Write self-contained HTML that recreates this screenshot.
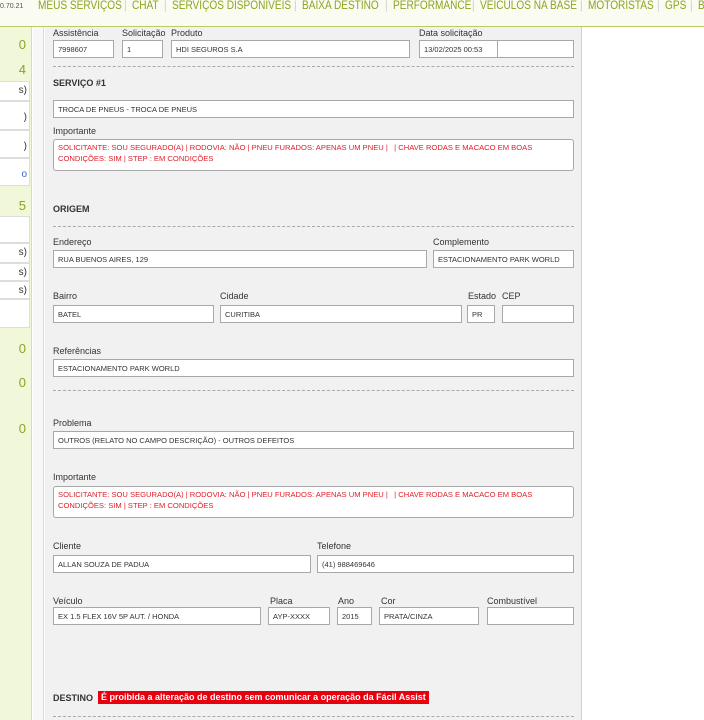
<!DOCTYPE html>
<html><head><meta charset="utf-8"><style>
*{margin:0;padding:0;box-sizing:border-box}
body{width:704px;height:720px;overflow:hidden;background:#fff;font-family:"Liberation Sans",sans-serif;position:relative;font-size:9px;color:#333}
.a{position:absolute}
.nav{left:0;top:0;width:704px;height:27px;background:#fafcf2;border-bottom:1px solid #b9cc6a}
.nav span.it{position:absolute;top:-2px;font-size:12px;color:#8aa420;white-space:nowrap;transform:scaleX(0.84);transform-origin:0 0}
.side{left:0;top:27px;width:32px;height:693px;background:#f1f7d9;border-right:1px solid #d6e3a0}
.strip{left:33px;top:27px;width:11px;height:693px;background:#f7f7f7;border-right:1px solid #d8d8d8}
.panel{left:45px;top:27px;width:537px;height:693px;background:#f1f1f1;border-right:1px solid #d0d0d0}
.num{font-size:13px;color:#8aa420;right:678px;text-align:right}
.sb{left:0;width:30px;background:#fff;border:1px solid #ddd;border-left:none;font-size:10px;text-align:right;padding-right:2px}
.l{font-size:9px;color:#333}
.i{background:#fff;border:1px solid #a8a8a8;height:18px;font-size:7.5px;padding:4px 4px;white-space:nowrap;overflow:hidden;color:#333}
.t{background:#fff;border:1px solid #a8a8a8;border-radius:3px;height:32px;font-size:7.6px;padding:2px 4px;color:#e0202a;line-height:11px}
.h{font-size:9px;font-weight:bold;color:#333}
.d{left:53px;width:521px;border-top:1px dashed #aaa;height:0}
</style></head><body>
<div class="a nav">
<span class="a" style="left:0;top:3px;font-size:7px;color:#555">0.70.21</span>
<span class="it" style="left:38px">MEUS SERVIÇOS</span>
<span class="it" style="left:124px;color:#ccc">|</span>
<span class="it" style="left:132px">CHAT</span>
<span class="it" style="left:164px;color:#ccc">|</span>
<span class="it" style="left:172px">SERVIÇOS DISPONIVEIS</span>
<span class="it" style="left:294px;color:#ccc">|</span>
<span class="it" style="left:302px">BAIXA DESTINO</span>
<span class="it" style="left:385px;color:#ccc">|</span>
<span class="it" style="left:393px">PERFORMANCE</span>
<span class="it" style="left:472px;color:#ccc">|</span>
<span class="it" style="left:480px">VEICULOS NA BASE</span>
<span class="it" style="left:580px;color:#ccc">|</span>
<span class="it" style="left:588px">MOTORISTAS</span>
<span class="it" style="left:657px;color:#ccc">|</span>
<span class="it" style="left:665px">GPS</span>
<span class="it" style="left:690px;color:#ccc">|</span>
<span class="it" style="left:698px">B</span>
</div>
<div class="a side"></div>
<div class="a strip"></div>
<div class="a panel"></div>
<div class="a num" style="top:37px">0</div>
<div class="a num" style="top:62px">4</div>
<div class="a sb" style="top:81px;height:20px;padding-top:3px">s)</div>
<div class="a sb" style="top:101px;height:29px;padding-top:10px">)</div>
<div class="a sb" style="top:130px;height:28px;padding-top:10px">)</div>
<div class="a sb" style="top:158px;height:28px;padding-top:10px;color:#36c">o</div>
<div class="a num" style="top:198px">5</div>
<div class="a sb" style="top:216px;height:27px"></div>
<div class="a sb" style="top:243px;height:20px;padding-top:3px">s)</div>
<div class="a sb" style="top:263px;height:18px;padding-top:3px">s)</div>
<div class="a sb" style="top:281px;height:18px;padding-top:3px">s)</div>
<div class="a sb" style="top:299px;height:29px"></div>
<div class="a num" style="top:341px">0</div>
<div class="a num" style="top:375px">0</div>
<div class="a num" style="top:421px">0</div>

<div class="a l" style="left:53px;top:28px">Assistência</div>
<div class="a l" style="left:122px;top:28px">Solicitação</div>
<div class="a l" style="left:171px;top:28px">Produto</div>
<div class="a l" style="left:419px;top:28px">Data solicitação</div>
<div class="a i" style="left:53px;top:40px;width:61px">7998607</div>
<div class="a i" style="left:122px;top:40px;width:41px">1</div>
<div class="a i" style="left:171px;top:40px;width:239px">HDI SEGUROS S.A</div>
<div class="a i" style="left:419px;top:40px;width:79px">13/02/2025 00:53</div>
<div class="a i" style="left:497px;top:40px;width:77px"></div>
<div class="a d" style="top:66px"></div>
<div class="a h" style="left:53px;top:78px">SERVIÇO #1</div>
<div class="a i" style="left:53px;top:100px;width:521px">TROCA DE PNEUS - TROCA DE PNEUS</div>
<div class="a l" style="left:53px;top:126px">Importante</div>
<div class="a t" style="left:53px;top:139px;width:521px">SOLICITANTE: SOU SEGURADO(A) | RODOVIA: NÃO | PNEU FURADOS: APENAS UM PNEU | &nbsp; | CHAVE RODAS E MACACO EM BOAS CONDIÇÕES: SIM | STEP : EM CONDIÇÕES</div>
<div class="a h" style="left:53px;top:204px">ORIGEM</div>
<div class="a d" style="top:226px"></div>
<div class="a l" style="left:53px;top:237px">Endereço</div>
<div class="a l" style="left:433px;top:237px">Complemento</div>
<div class="a i" style="left:53px;top:250px;width:374px">RUA BUENOS AIRES, 129</div>
<div class="a i" style="left:433px;top:250px;width:141px">ESTACIONAMENTO PARK WORLD</div>
<div class="a l" style="left:53px;top:291px">Bairro</div>
<div class="a l" style="left:220px;top:291px">Cidade</div>
<div class="a l" style="left:468px;top:291px">Estado</div>
<div class="a l" style="left:502px;top:291px">CEP</div>
<div class="a i" style="left:53px;top:305px;width:161px">BATEL</div>
<div class="a i" style="left:220px;top:305px;width:242px">CURITIBA</div>
<div class="a i" style="left:467px;top:305px;width:28px">PR</div>
<div class="a i" style="left:502px;top:305px;width:72px"></div>
<div class="a l" style="left:53px;top:346px">Referências</div>
<div class="a i" style="left:53px;top:359px;width:521px">ESTACIONAMENTO PARK WORLD</div>
<div class="a d" style="top:390px"></div>
<div class="a l" style="left:53px;top:418px">Problema</div>
<div class="a i" style="left:53px;top:431px;width:521px">OUTROS (RELATO NO CAMPO DESCRIÇÃO) - OUTROS DEFEITOS</div>
<div class="a l" style="left:53px;top:472px">Importante</div>
<div class="a t" style="left:53px;top:486px;width:521px">SOLICITANTE: SOU SEGURADO(A) | RODOVIA: NÃO | PNEU FURADOS: APENAS UM PNEU | &nbsp; | CHAVE RODAS E MACACO EM BOAS CONDIÇÕES: SIM | STEP : EM CONDIÇÕES</div>
<div class="a l" style="left:53px;top:541px">Cliente</div>
<div class="a l" style="left:317px;top:541px">Telefone</div>
<div class="a i" style="left:53px;top:555px;width:258px">ALLAN SOUZA DE PADUA</div>
<div class="a i" style="left:317px;top:555px;width:257px">(41) 988469646</div>
<div class="a l" style="left:53px;top:596px">Veículo</div>
<div class="a l" style="left:270px;top:596px">Placa</div>
<div class="a l" style="left:338px;top:596px">Ano</div>
<div class="a l" style="left:381px;top:596px">Cor</div>
<div class="a l" style="left:487px;top:596px">Combustível</div>
<div class="a i" style="left:53px;top:607px;width:208px">EX 1.5 FLEX 16V 5P AUT. / HONDA</div>
<div class="a i" style="left:268px;top:607px;width:62px">AYP-XXXX</div>
<div class="a i" style="left:337px;top:607px;width:35px">2015</div>
<div class="a i" style="left:379px;top:607px;width:100px">PRATA/CINZA</div>
<div class="a i" style="left:487px;top:607px;width:87px"></div>
<div class="a h" style="left:53px;top:693px">DESTINO</div>
<div class="a" style="left:98px;top:691px;width:331px;height:13px;background:#e8000f;color:#fff;font-weight:bold;font-size:9px;padding:1px 3px;white-space:nowrap">É proibida a alteração de destino sem comunicar a operação da Fácil Assist</div>
<div class="a d" style="top:716px"></div>
</body></html>
